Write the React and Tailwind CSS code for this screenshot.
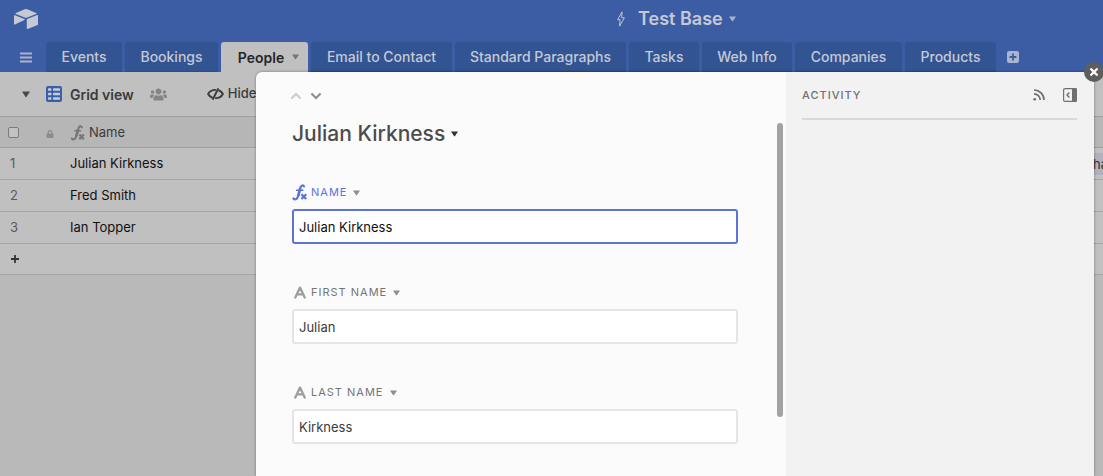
import React from "react";
import { SiAirtable } from "react-icons/si";
import { FaUsers, FaLock } from "react-icons/fa";

const tabs = [
  { name: "Events", width: "w-[76px]" },
  { name: "Bookings", width: "w-[93px]" },
  { name: "People", width: "w-[87px]", active: true },
  { name: "Email to Contact", width: "w-[141px]" },
  { name: "Standard Paragraphs", width: "w-[171px]" },
  { name: "Tasks", width: "w-[70px]" },
  { name: "Web Info", width: "w-[90px]" },
  { name: "Companies", width: "w-[107px]" },
  { name: "Products", width: "w-[91px]" },
];

const people = ["Julian Kirkness", "Fred Smith", "Ian Topper"];

function Caret({ className }) {
  return (
    <svg viewBox="0 0 8 7" className={className} fill="currentColor" aria-hidden="true">
      <path d="M0.6 0.5h6.8a.4.4 0 0 1 .35.6L4.4 6a.5.5 0 0 1-.8 0L.25 1.1a.4.4 0 0 1 .35-.6z" />
    </svg>
  );
}

function FormulaIcon({ className }) {
  return (
    <svg viewBox="0 0 16 17" className={className} fill="none" stroke="currentColor" aria-hidden="true">
      <path d="M12 2.4C11.2 .7 9.2 1.2 8.5 3.400 7.800 5.800 6.600 11 5.600 13.400 4.800 15.400 2.600 16 1.500 14.500" strokeWidth="2.200" strokeLinecap="round" />
      <path d="M8.100 4.500L6.200 12" strokeWidth="2.700" />
      <path d="M4.600 6.200h6.200" strokeWidth="1.600" strokeLinecap="round" />
      <path d="M9.400 10.200l4.800 4.800M14.200 10.200l-4.800 4.800" strokeWidth="2.300" />
    </svg>
  );
}

function TextIcon({ className }) {
  return (
    <svg viewBox="0 0 12 13" className={className} fill="none" stroke="currentColor" strokeLinecap="round" strokeLinejoin="round" aria-hidden="true">
      <path d="M1.3 11.6L6 1.6l4.7 10M3 8.4h6" strokeWidth="2.300" />
    </svg>
  );
}

function GridIcon({ className }) {
  return (
    <svg viewBox="0 0 16 16" className={className} aria-hidden="true">
      <rect width="16" height="16" rx="2" fill="#3b5eab" />
      <g fill="#c6cbd8">
        <rect x="2" y="2.2" width="3.4" height="2.6" rx=".6" />
        <rect x="7" y="2.2" width="7" height="2.6" rx=".6" />
        <rect x="2" y="6.7" width="3.4" height="2.6" rx=".6" />
        <rect x="7" y="6.7" width="7" height="2.6" rx=".6" />
        <rect x="2" y="11.2" width="3.4" height="2.6" rx=".6" />
        <rect x="7" y="11.2" width="7" height="2.6" rx=".6" />
      </g>
    </svg>
  );
}

function HideIcon({ className }) {
  return (
    <svg viewBox="0 0 17 12" className={className} fill="none" stroke="currentColor" strokeWidth="1.900" strokeLinecap="round" aria-hidden="true">
      <path d="M8.200 1.900C4.800 1.900 2.300 3.800 1.100 6c.8 1.500 2.100 2.800 3.800 3.500" />
      <path d="M8.800 10.100C12.200 10.100 14.700 8.200 15.900 6c-.8-1.500-2.100-2.800-3.800-3.500" />
      <path d="M11 1L6 11" />
    </svg>
  );
}

function Header() {
  return (
    <header className="bg-[#3c5da4] text-[#c4c9d4]">
      <div className="flex h-[42px] items-center px-3">
        <div className="flex flex-[17] items-center pb-1">
          <a href="#home" aria-label="Home">
            <SiAirtable className="ml-0.5 size-6" />
          </a>
        </div>
        <button className="flex items-center pb-1 text-[18px] leading-6 font-semibold">
          <svg viewBox="0 0 10 18" className="mr-3 h-4 w-2.5" fill="none" stroke="currentColor" strokeWidth="1.1" strokeLinejoin="round" aria-hidden="true">
            <path d="M6.200 1L1.200 9.800H4L3.400 17L8.800 7.600H5.700z" />
          </svg>
          Test Base
          <Caret className="ml-1.5 h-1.5 w-[7px] opacity-80" />
        </button>
        <div className="flex-[10]" />
      </div>
      <nav className="flex h-[30px] gap-[3px]">
        <button aria-label="All tables" className="flex w-[43px] items-center justify-end pr-[11px]">
          <svg viewBox="0 0 12 11" className="h-[11px] w-3" stroke="#a9b4ce" strokeWidth="1.800" aria-hidden="true">
            <path d="M0 1.500h12M0 5.500h12M0 9.500h12" />
          </svg>
        </button>
        {tabs.map((tab) =>
          tab.active ? (
            <button key={tab.name} className={`${tab.width} flex shrink-0 items-center justify-center gap-2 rounded-t-[3px] bg-[#c0c0c0] pl-2 text-[14px] font-semibold whitespace-nowrap text-[#262626]`}>
              {tab.name}
              <Caret className="h-1.5 w-[7px] text-[#757575]" />
            </button>
          ) : (
            <button key={tab.name} className={`${tab.width} shrink-0 rounded-t-[3px] border-b border-[#2e4b85] bg-[#335493] text-[14px] font-medium whitespace-nowrap`}>
              {tab.name}
            </button>
          )
        )}
        <button aria-label="Add table" className="ml-2 flex items-center">
          <svg viewBox="0 0 12 12" className="size-3" aria-hidden="true">
            <rect width="12" height="12" rx="2" fill="#a9b4ce" />
            <path d="M6 2.600v6.800M2.600 6h6.800" stroke="#3c5da4" strokeWidth="1.800" />
          </svg>
        </button>
      </nav>
    </header>
  );
}

function Toolbar() {
  return (
    <div className="flex h-[44px] items-center bg-[#c0c0c0] pl-[22px] text-[#3b3b3b]">
      <button aria-label="Toggle views">
        <Caret className="h-[7px] w-2 text-[#4a4a4a]" />
      </button>
      <button className="ml-4 flex items-center gap-2 text-[14px] font-semibold">
        <GridIcon className="size-4" />
        Grid view
      </button>
      <FaUsers className="ml-4 size-[17px] text-[#858585]" />
      <button className="ml-10 flex items-center gap-1 text-[13px] font-medium whitespace-nowrap">
        <HideIcon className="h-3 w-[17px]" />
        Hide fields
      </button>
    </div>
  );
}

function Grid() {
  return (
    <table className="w-full table-fixed border-collapse text-left text-[13px]">
      <thead>
        <tr className="h-[31px] border-y border-[#a0a0a0] bg-[#b6b6b6] text-[#3b3b3b]">
          <th className="w-[70px] p-0 font-normal">
            <div className="flex items-center pl-2">
              <input type="checkbox" aria-label="Select all" className="size-[11px] appearance-none rounded-[2px] border border-[#777b85] bg-[#c2c2c2]" />
              <FaLock className="ml-[27px] mt-1 h-2 w-2 text-[#8c8c8c]" />
            </div>
          </th>
          <th className="p-0 pt-0.5 font-normal">
            <div className="flex items-center gap-[3px]">
              <FormulaIcon className="h-4 w-4 text-[#777777]" />
              Name
            </div>
          </th>
          <th className="w-[14px] p-0" />
        </tr>
      </thead>
      <tbody className="bg-[#c0c0c0]">
        {people.map((name, i) => (
          <tr key={name} className="h-8 border-b border-[#a5a5a5]">
            <td className="p-0 pl-2.5 text-[#5c5c5c]">{i + 1}</td>
            <td className="p-0 text-[#111111]">{name}</td>
            <td className="overflow-hidden p-0 whitespace-nowrap text-[#333333]">
              {i === 0 && <span className="block bg-[#b1b1bd] pl-1 leading-[22px]">ha</span>}
            </td>
          </tr>
        ))}
        <tr className="h-[31px] border-b border-[#a5a5a5]">
          <td className="p-0 pl-[11px]" colSpan={3}>
            <button aria-label="Add record" className="block">
              <svg viewBox="0 0 8 8" className="size-2" stroke="#333333" strokeWidth="1.800" aria-hidden="true">
                <path d="M4 0v8M0 4h8" />
              </svg>
            </button>
          </td>
        </tr>
      </tbody>
    </table>
  );
}

function Field({ id, label, value, formula }) {
  return (
    <div>
      <div className="flex h-[17px] items-center">
        {formula ? (
          <FormulaIcon className="mr-[3px] h-[17px] w-4 text-[#5b74d8]" />
        ) : (
          <TextIcon className="mr-[5px] ml-0.5 h-[13px] w-3 text-[#9e9e9e]" />
        )}
        <label htmlFor={id} className={`text-[11px] tracking-[1px] uppercase ${formula ? "text-[#5b74d8]" : "text-[#757575]"}`}>
          {label}
        </label>
        <button aria-label={`${label} options`} className="ml-1.5">
          <Caret className="h-1.5 w-[7px] text-[#8f8f8f]" />
        </button>
      </div>
      <input
        id={id}
        type="text"
        defaultValue={value}
        className={`mt-2 block h-[35px] w-full rounded-[3px] border-2 bg-white px-[5px] text-[13px] outline-none ${formula ? "border-[#5b74d8] text-[#111111]" : "border-[#e5e5e5] text-[#3b3b3b]"}`}
      />
    </div>
  );
}

function RecordDialog() {
  return (
    <section role="dialog" aria-label="Julian Kirkness" className="relative flex h-full rounded-t-[6px] bg-[#fbfbfb] shadow-[0_0_3px_rgba(0,0,0,0.4)]">
      <div className="flex min-w-0 flex-1 overflow-hidden pl-9">
        <div className="min-w-0 flex-1 pt-4">
          <div className="-ml-0.5 flex h-4 items-center gap-2 text-[#8c8c8c]">
            <button aria-label="Previous record" className="text-[#cccccc]">
              <svg viewBox="0 0 12 8" className="h-2 w-3" fill="none" stroke="currentColor" strokeWidth="2" aria-hidden="true">
                <path d="M1.400 6.500L6 2l4.600 4.500" />
              </svg>
            </button>
            <button aria-label="Next record">
              <svg viewBox="0 0 12 8" className="h-2 w-3" fill="none" stroke="currentColor" strokeWidth="2" aria-hidden="true">
                <path d="M1.400 1.500L6 6l4.600-4.500" />
              </svg>
            </button>
          </div>
          <h1 className="mt-4 flex h-7 items-center text-[21px] font-medium text-[#4c4c4c]">
            Julian Kirkness
            <button aria-label="Record options" className="ml-1.5">
              <Caret className="h-1.5 w-[7px] text-[#333333]" />
            </button>
          </h1>
          <div className="mt-9 flex flex-col gap-10">
            <Field id="name" label="Name" value="Julian Kirkness" formula />
            <Field id="first-name" label="First name" value="Julian" />
            <Field id="last-name" label="Last name" value="Kirkness" />
          </div>
        </div>
        <div className="ml-[39px] mt-[51px] mr-[3px] h-[294px] w-1.5 shrink-0 rounded-full bg-[#a2a2a2]" />
      </div>
      <aside className="w-[308px] shrink-0 rounded-tr-[6px] bg-[#f2f2f2] pr-[17px] pl-4 pt-[15px] text-[#707070]">
        <div className="flex h-[33px] items-start justify-between border-b-2 border-[#d9d9d9]">
          <h2 className="text-[11px] leading-4 font-medium tracking-[1px] uppercase">Activity</h2>
          <div className="flex items-center gap-[18px]">
            <button aria-label="Subscribe to activity">
              <svg viewBox="0 0 12 12" className="mt-px size-3" fill="none" stroke="currentColor" strokeWidth="1.700" aria-hidden="true">
                <path d="M1 1c5.500 0 10 4.500 10 10M1 4.800c3.400 0 6.200 2.800 6.200 6.200" />
                <circle cx="1.700" cy="10.300" r="1.400" fill="currentColor" stroke="none" />
              </svg>
            </button>
            <button aria-label="Collapse activity">
              <svg viewBox="0 0 14 14" className="mt-px size-3.5" fill="none" stroke="currentColor" aria-hidden="true">
                <rect x=".6" y=".6" width="12.800" height="12.800" rx="1.500" strokeWidth="1.200" />
                <path d="M9 0h3.500A1.500 1.500 0 0 1 14 1.500v11a1.500 1.500 0 0 1-1.500 1.500H9z" fill="currentColor" stroke="none" />
                <path d="M6.400 4.500L4 7l2.400 2.500" strokeWidth="1.400" />
              </svg>
            </button>
          </div>
        </div>
      </aside>
      <button aria-label="Close" className="absolute -top-2.5 -right-2.5 flex size-5 items-center justify-center rounded-full bg-[#5e5e5e]">
        <svg viewBox="0 0 8 8" className="size-2" stroke="#ffffff" strokeWidth="2.300" strokeLinecap="round" aria-hidden="true">
          <path d="M1.200 1.200l5.600 5.600M6.800 1.200L1.200 6.800" />
        </svg>
      </button>
    </section>
  );
}

export default function App() {
  return (
    <div className="relative min-h-screen overflow-hidden bg-[#b9b9b9] font-[Inter,'Liberation_Sans',sans-serif]">
      <Header />
      <Toolbar />
      <Grid />
      <div className="absolute inset-0 pt-[72px] pr-[9px] pl-64">
        <RecordDialog />
      </div>
    </div>
  );
}
